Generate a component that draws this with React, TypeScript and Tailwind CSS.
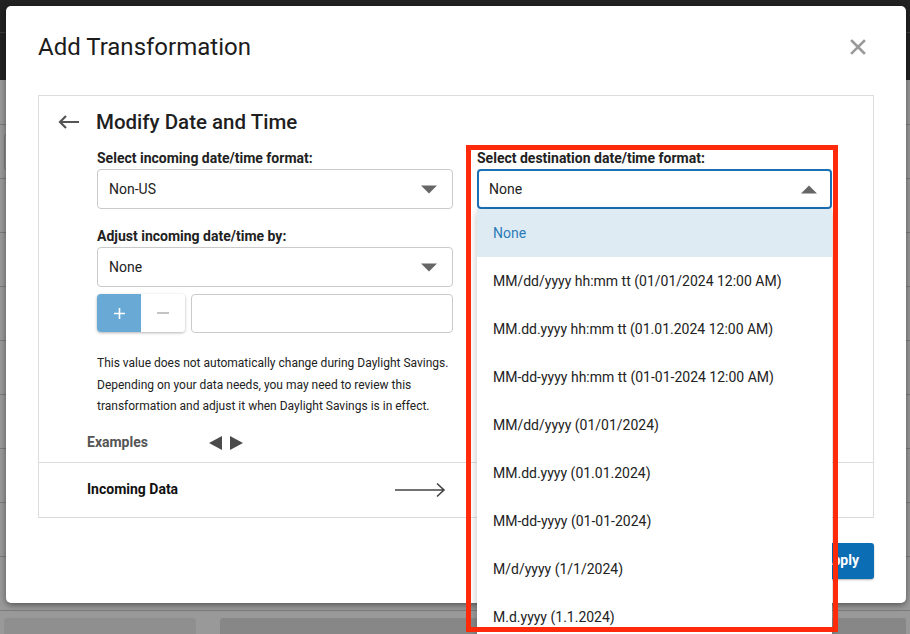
import React from 'react';

const formats = [
  'None',
  'MM/dd/yyyy hh:mm tt (01/01/2024 12:00 AM)',
  'MM.dd.yyyy hh:mm tt (01.01.2024 12:00 AM)',
  'MM-dd-yyyy hh:mm tt (01-01-2024 12:00 AM)',
  'MM/dd/yyyy (01/01/2024)',
  'MM.dd.yyyy (01.01.2024)',
  'MM-dd-yyyy (01-01-2024)',
  'M/d/yyyy (1/1/2024)',
  'M.d.yyyy (1.1.2024)',
];

const Caret = ({ up }: { up?: boolean }) => (
  <svg width="16" height="9" viewBox="0 0 16 9" className="shrink-0">
    {up ? <path d="M0 8.5 L8 0.5 L16 8.5 Z" fill="#666" /> : <path d="M0 0.5 L16 0.5 L8 8.5 Z" fill="#666" />}
  </svg>
);

const SelectBox = ({ value, open }: { value: string; open?: boolean }) => (
  <div
    className={
      open
        ? 'h-[40px] rounded-[4px] border-2 border-[#1b6fb4] bg-white flex items-center justify-between pl-[10px] pr-[13px] text-[14px] text-[#222]'
        : 'h-[40px] rounded-[4px] border border-[#cacaca] bg-white flex items-center justify-between pl-[11px] pr-[15px] text-[14px] text-[#222]'
    }
  >
    <span>{value}</span>
    <Caret up={open} />
  </div>
);

const Label = ({ children }: { children: React.ReactNode }) => (
  <div className="text-[14px] leading-[16px] font-bold text-[#222] mb-[3px] whitespace-nowrap">{children}</div>
);

export default function App() {
  return (
    <div className="relative w-[910px] h-[634px] overflow-hidden bg-[#999999] font-['Roboto','Liberation_Sans',sans-serif]">
      {/* page behind the overlay */}
      <div className="h-[80px] bg-[#222222] flex flex-col">
        <div className="h-[33px] border-b border-[#3a3a3a]" />
      </div>
      <div className="h-[45px] border-b border-[#7b7b7b]" />
      <div className="h-[54px] border-b border-[#7b7b7b] pt-[9px] pl-[4px]">
        <div className="w-[60px] h-[36px] rounded-[3px] border border-[#7f7f7f]" />
      </div>
      {[0, 1, 2, 3, 4, 5, 6, 7].map((i) => (
        <div key={i} className="h-[54px] border-b border-[#7b7b7b]" />
      ))}
      <div className="flex gap-[24px] pt-[7px] px-[4px]">
        <div className="w-[192px] h-[20px] rounded-t-[3px] bg-[#8f8f8f]" />
        <div className="flex-1 h-[20px] rounded-t-[3px] bg-[#878787]" />
      </div>

      {/* modal */}
      <div className="absolute left-[6px] top-[6px] w-[900px] bg-white rounded-[5px] shadow-[0_2px_6px_rgba(0,0,0,0.45)] px-[32px] pt-[27px] pb-[24px]">
        <div className="flex items-center justify-between h-[28px]">
          <h1 className="text-[24px] leading-[28px] text-[#1c1c1c]">Add Transformation</h1>
          <svg width="16" height="16" viewBox="0 0 16 16" className="mr-[8px]">
            <path d="M2 2 L14 14 M14 2 L2 14" stroke="#9a9a9a" strokeWidth="2.6" strokeLinecap="square" />
          </svg>
        </div>

        <div className="mt-[34px] border border-[#dcdcdc]">
          <div className="pt-[12px] pl-[19px] flex items-center h-[40px] gap-[16px]">
            <svg width="22" height="14" viewBox="0 0 22 14">
              <path d="M21 7 H2 M8 1 L2 7 L8 13" stroke="#555" strokeWidth="2.2" fill="none" />
            </svg>
            <span className="text-[20.5px] leading-[28px] font-medium text-[#1f1f1f]">Modify Date and Time</span>
          </div>

          <div className="ml-[58px] mt-[14px] grid grid-cols-[356px_355px] gap-x-[24px] items-start">
            <div>
              <Label>Select incoming date/time format:</Label>
              <SelectBox value="Non-US" />
              <div className="mt-[19px]">
                <Label>Adjust incoming date/time by:</Label>
                <SelectBox value="None" />
              </div>
              <div className="mt-[7px] flex gap-[6px]">
                <div className="flex h-[38px] rounded-[4px] overflow-hidden shadow-[0_1px_3px_rgba(0,0,0,0.3)]">
                  <div className="w-[44px] bg-[#68a9d5] flex items-center justify-center">
                    <svg width="11" height="11" viewBox="0 0 11 11">
                      <path d="M5.5 0 V11 M0 5.5 H11" stroke="#fff" strokeWidth="1.6" />
                    </svg>
                  </div>
                  <div className="w-[44px] bg-white flex items-center justify-center">
                    <svg width="12" height="2" viewBox="0 0 12 2">
                      <path d="M0 1 H12" stroke="#b0b0b0" strokeWidth="1.4" />
                    </svg>
                  </div>
                </div>
                <div className="flex-1 h-[39px] rounded-[4px] border border-[#cacaca] bg-white" />
              </div>
              <p className="mt-[20px] text-[12px] leading-[21.5px] text-[#222]">
                <span className="block whitespace-nowrap">This value does not automatically change during Daylight Savings.</span>
                <span className="block whitespace-nowrap">Depending on your data needs, you may need to review this</span>
                <span className="block whitespace-nowrap">transformation and adjust it when Daylight Savings is in effect.</span>
              </p>
            </div>

            <div>
              <Label>Select destination date/time format:</Label>
              <div className="relative z-10">
                <SelectBox value="None" open />
                <div className="absolute left-0 right-0 top-full bg-white shadow-[0_3px_8px_rgba(0,0,0,0.25)]">
                  {formats.map((f, i) => (
                    <div
                      key={f}
                      className={
                        i === 0
                          ? 'h-[48px] flex items-center px-[16px] text-[14px] bg-[#dfebf2] text-[#2b7bb9]'
                          : 'h-[48px] flex items-center px-[16px] text-[14px] text-[#222]'
                      }
                    >
                      {f}
                    </div>
                  ))}
                </div>
              </div>
            </div>
          </div>

          <div className="pl-[48px] mt-[15px] mb-[9px] h-[20px] flex items-center">
            <span className="w-[122px] text-[14px] font-bold text-[#555]">Examples</span>
            <div className="flex items-center gap-[8px]">
              <svg width="13" height="14" viewBox="0 0 13 14">
                <path d="M13 0 V14 L0 7 Z" fill="#4b4b4b" />
              </svg>
              <svg width="13" height="14" viewBox="0 0 13 14">
                <path d="M0 0 V14 L13 7 Z" fill="#4b4b4b" />
              </svg>
            </div>
          </div>
          <div className="border-t border-[#dcdcdc] h-[55px] flex items-center pl-[48px]">
            <span className="w-[308px] text-[14px] font-bold text-[#111]">Incoming Data</span>
            <svg width="51" height="16" viewBox="0 0 51 16">
              <path d="M0 8 H49 M42 1.5 L49 8 L42 14.5" stroke="#444" strokeWidth="1.6" fill="none" />
            </svg>
          </div>
        </div>

        <div className="mt-[25px] flex justify-end">
          <button className="h-[36px] px-[15px] rounded-[3px] bg-[#0b6db4] text-white text-[14px] font-bold shadow-[0_1px_2px_rgba(0,0,0,0.3)]">
            Apply
          </button>
        </div>
      </div>

      {/* highlight annotation */}
      <div className="absolute left-[466px] top-[145px] w-[372px] h-[487px] border-[5px] border-[#ff2a0a] pointer-events-none z-20" />
    </div>
  );
}
